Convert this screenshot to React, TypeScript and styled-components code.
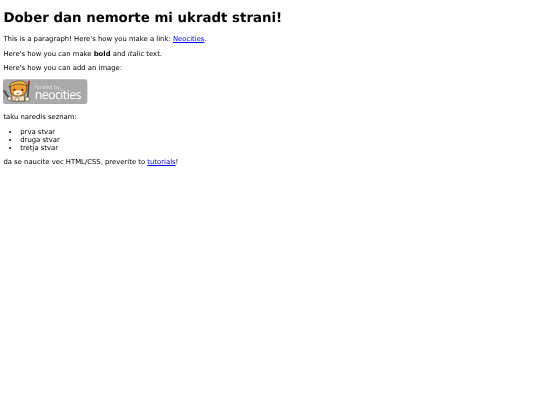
import styled, { createGlobalStyle } from "styled-components"

const GlobalStyle = createGlobalStyle`
  html, body {
    background: #fff;
  }
  body {
    margin: 3.375px;
    font-family: "DejaVu Sans", sans-serif;
    font-size: 6.85px;
    line-height: 7.8px;
    color: #000;
    text-rendering: geometricPrecision;
  }
`;

const Page = styled.div`
  filter: blur(0.25px);
`;

const Heading = styled.h1`
  font-size: 13.35px;
  line-height: 15.6px;
  font-weight: bold;
  margin: 7.3px 0 10px;
`;

const Paragraph = styled.p`
  margin: 6.75px 0;
`;

const ImageParagraph = styled.p`
  margin: -1px 0 6.75px;
`;

const Link = styled.a`
  color: #0000ee;
  text-decoration: underline;
`;

const Badge = styled.svg`
  width: 84.4px;
  height: 25.3px;
`;

const List = styled.ul`
  margin: 7.75px 0 6.75px;
  padding-left: 16.875px;
`;

const NeocitiesBadge = () => (
  <Badge viewBox="0 0 85 25">
    <rect width="85" height="25" rx="2.5" fill="#a9a9a9" />
    {/* wrench */}
    <path d="M1.5 12l2 3.5 3 3.5" fill="none" stroke="#47474a" strokeWidth="1.8" strokeLinecap="round" />
    <path d="M0.5 11l1 2.5 2-1" fill="none" stroke="#47474a" strokeWidth="1" />
    {/* body */}
    <path d="M9 15l12 0 1 7-13 0z" fill="#f6dcb0" stroke="#3a2a1a" strokeWidth="0.6" />
    {/* cat head */}
    <path d="M7 7l2-1 4-2 6 0 5 2 0 5-2 4-4 2-6 0-4-3z" fill="#ee9a36" stroke="#3a2a1a" strokeWidth="0.7" />
    <path d="M11 12l4-1 4 1 0 3-4 1.500-4-1.500z" fill="#fff3dd" />
    <circle cx="11.500" cy="10.500" r="1" fill="#1c1c1c" />
    <circle cx="19.500" cy="10.500" r="1" fill="#1c1c1c" />
    <path d="M13.500 14q1.500 1 3 0" fill="none" stroke="#7d3320" strokeWidth="0.7" />
    {/* hard hat */}
    <path d="M6 8l2-4 5-2 6-0.500 4 2 2 3-7-1.500-5 0z" fill="#eab840" stroke="#3a2a1a" strokeWidth="0.6" />
    {/* paws */}
    <circle cx="6.500" cy="19.500" r="2" fill="#fbf3e2" stroke="#3a2a1a" strokeWidth="0.5" />
    <circle cx="14" cy="20.500" r="2" fill="#fbf3e2" stroke="#3a2a1a" strokeWidth="0.5" />
    {/* paintbrush */}
    <path d="M26 4l-1 14" stroke="#4a3426" strokeWidth="1.3" />
    <path d="M25 1.500l2 0 0.300 3.500-2.500 0z" fill="#b5332a" />
    <circle cx="24.500" cy="20" r="2.200" fill="#fbf3e2" stroke="#3a2a1a" strokeWidth="0.5" />
    <text x="32" y="9.500" fontFamily="'Open Sans', sans-serif" fontSize="5.500" fill="#e4e4e4">hosted by,</text>
    <text x="32" y="20" fontFamily="'Open Sans', sans-serif" fontSize="12.500" fill="#ffffff" textLength="47">neocities</text>
  </Badge>
);

export default function App() {
  return (
    <Page>
      <GlobalStyle />
      <Heading>Dober dan nemorte mi ukradt strani!</Heading>
      <Paragraph>
        This is a paragraph! Here's how you make a link: <Link href="#">Neocities</Link>.
      </Paragraph>
      <Paragraph>
        Here's how you can make <strong>bold</strong> and <em>italic</em> text.
      </Paragraph>
      <Paragraph>Here's how you can add an image:</Paragraph>
      <ImageParagraph>
        <NeocitiesBadge />
      </ImageParagraph>
      <Paragraph>taku naredis seznam:</Paragraph>
      <List>
        <li>prva stvar</li>
        <li>druga stvar</li>
        <li>tretja stvar</li>
      </List>
      <Paragraph>
        da se naucite vec HTML/CSS, preverite to <Link href="#">tutorials</Link>!
      </Paragraph>
    </Page>
  );
}
